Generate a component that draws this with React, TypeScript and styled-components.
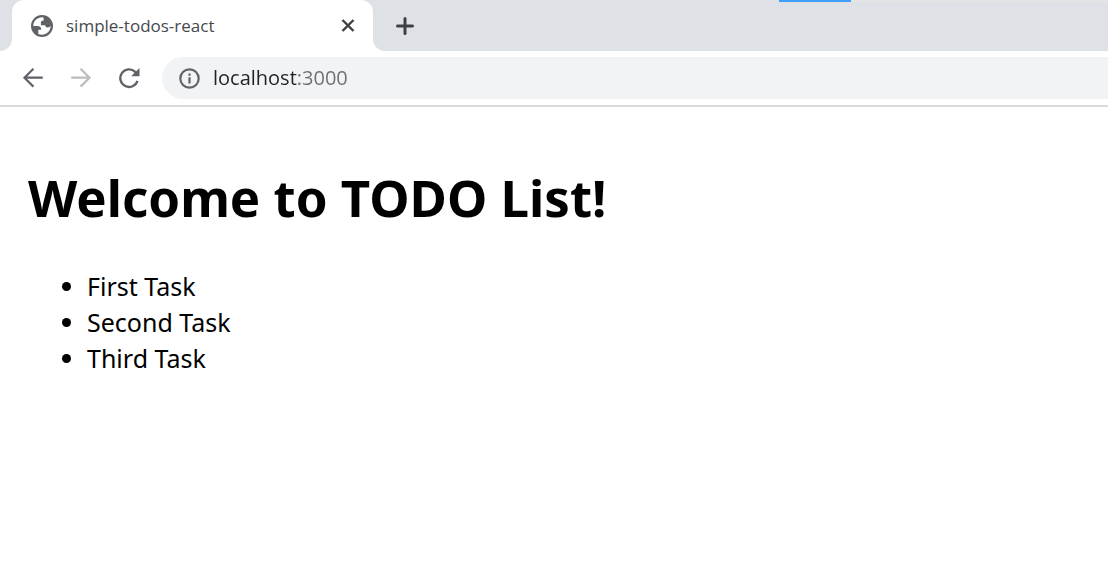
import React from "react";
import styled, { createGlobalStyle } from "styled-components";

const GlobalStyle = createGlobalStyle`
  * { box-sizing: border-box; }
  body { margin: 0; background: #fff; color: #000; }
`;

const uiFont = `"Open Sans", "Noto Sans", sans-serif`;
const pageFont = `"Noto Sans", "DejaVu Sans", sans-serif`;

const TabStrip = styled.header`
  position: relative;
  display: flex;
  height: 51px;
  background: #dee1e6;
`;

const StripBase = styled.div`
  display: flex;
  flex: 1;
  background: linear-gradient(to right, #fff 400px, #dee1e6 400px);
`;

const StripCorner = styled.div`
  flex: 0 0 12px;
  background: #dee1e6;
  border-radius: 0 0 12px 0;
`;

const TabCap = styled.div`
  display: flex;
  flex: 0 0 361px;
  background: linear-gradient(to bottom, #dee1e6 25px, #fff 25px);
`;

const Tab = styled.div`
  display: flex;
  align-items: center;
  flex: 1;
  padding: 1px 14px 0 18px;
  background: #fff;
  border-radius: 12px 12px 0 0;
`;

const TabTitle = styled.span`
  flex: 1;
  margin-left: 12px;
  font: 17px/24px ${uiFont};
  color: #45494d;
`;

const NewTabArea = styled.div`
  display: flex;
  align-items: center;
  flex: 1;
  padding-left: 16px;
  background: #dee1e6;
  border-radius: 0 0 0 12px;
`;

const IconButton = styled.button<{ $size: number }>`
  display: flex;
  align-items: center;
  justify-content: center;
  width: ${(p) => p.$size}px;
  height: ${(p) => p.$size}px;
  padding: 0;
  border: 0;
  border-radius: 50%;
  background: transparent;
  color: #5f6368;
  &:disabled { color: #babcbe; }
`;

const LoadTrack = styled.div`
  position: absolute;
  top: 0;
  right: 0;
  left: 779px;
  height: 2px;
  background: #e5e5e5;
`;

const LoadBar = styled.div`
  width: 72px;
  height: 2px;
  background: #409eff;
`;

const Toolbar = styled.nav`
  display: flex;
  align-items: center;
  gap: 16px;
  height: 56px;
  padding-left: 17px;
  border-bottom: 2px solid #dadada;
  background: #fff;
`;

const AddressBar = styled.label`
  display: flex;
  align-items: center;
  gap: 12px;
  flex: 1;
  height: 42px;
  margin-left: 1px;
  padding-left: 16px;
  border-radius: 21px 0 0 21px;
  background: #f1f3f4;
`;

const AddressInput = styled.input`
  flex: 1;
  min-width: 0;
  padding: 0;
  border: 0;
  outline: 0;
  font: 20px/28px ${uiFont};
  color: transparent;
  caret-color: #202124;
  background: linear-gradient(to right, #202124 84px, #6b6f73 84px);
  -webkit-background-clip: text;
  background-clip: text;
`;

const Page = styled.main`
  padding: 54px 28px;
  font: 25px/36px ${pageFont};
`;

const Title = styled.h1`
  margin: 0 0 35px;
  font: bold 51px/72px ${pageFont};
`;

const TaskList = styled.ul`
  margin: 0;
  padding-left: 59px;
`;

const tasks = ["First Task", "Second Task", "Third Task"];

const Globe = () => (
  <svg width="24" height="24" viewBox="0 0 24 24" aria-hidden="true">
    <circle cx="12" cy="12" r="11" fill="#5f6368" />
    <path
      fill="#fff"
      d="M13 3.300C7.500 3 3.300 7 3.300 12H7.500c2.500 0 3.700 1.200 3.700 3.700H8.300v4.200c5.500 2.500 12.400-1.200 12.400-8.400c-.5 1.300-1.600 2-3 2c-1.900 0-2.500-1-2.500-2.200h-4.300V8.300c0-1 .7-1.600 1.600-1.600h1.100V5.100c0-.8-.1-1.300-.6-1.800z"
    />
  </svg>
);

export default function App() {
  return (
    <>
      <GlobalStyle />
      <TabStrip>
        <StripBase>
          <StripCorner />
          <TabCap>
            <Tab>
              <Globe />
              <TabTitle>simple-todos-react</TabTitle>
              <IconButton $size={22} aria-label="Close tab">
                <svg width="22" height="22" viewBox="0 0 22 22" fill="none" stroke="#3c4043" strokeWidth="2.400">
                  <path d="M5.500 5l11 11M16.500 5l-11 11" />
                </svg>
              </IconButton>
            </Tab>
          </TabCap>
          <NewTabArea>
            <IconButton $size={32} aria-label="New tab">
              <svg width="22" height="22" viewBox="0 0 22 22" fill="none" stroke="#3c4043" strokeWidth="3" strokeLinecap="round">
                <path d="M11 3.500v15M3.500 11h15" />
              </svg>
            </IconButton>
          </NewTabArea>
        </StripBase>
        <LoadTrack>
          <LoadBar />
        </LoadTrack>
      </TabStrip>
      <Toolbar aria-label="Browser navigation">
        <IconButton $size={32} aria-label="Back">
          <svg width="24" height="24" viewBox="0 0 24 24" fill="none" stroke="currentColor" strokeWidth="2.200">
            <path d="M21.800 11.700H3.500M12.400 2.800L3.500 11.700l8.900 8.900" />
          </svg>
        </IconButton>
        <IconButton $size={32} aria-label="Forward" disabled>
          <svg width="24" height="24" viewBox="0 0 24 24" fill="none" stroke="currentColor" strokeWidth="2.200">
            <path d="M2.200 11.700h18.300M11.600 2.800l8.900 8.900-8.900 8.900" />
          </svg>
        </IconButton>
        <IconButton $size={32} aria-label="Reload">
          <svg width="24" height="24" viewBox="0 0 24 24" fill="none" stroke="currentColor" strokeWidth="2.300">
            <path d="M20.500 14.800A8.800 8.800 0 1 1 18.200 5.800L20 7.600" />
            <path d="M22.500 2v8.300h-8.300z" fill="currentColor" stroke="none" />
          </svg>
        </IconButton>
        <AddressBar>
          <svg width="23" height="23" viewBox="0 0 23 23" fill="none" stroke="#5f6368" strokeWidth="2.200" role="img" aria-label="Site information">
            <circle cx="11.500" cy="11.500" r="9.200" />
            <path d="M11.500 10.300v6.200M11.500 6.400v2.300" />
          </svg>
          <AddressInput type="text" aria-label="Address" defaultValue="localhost:3000" />
        </AddressBar>
      </Toolbar>
      <Page>
        <Title>Welcome to TODO List!</Title>
        <TaskList>
          {tasks.map((task) => (
            <li key={task}>{task}</li>
          ))}
        </TaskList>
      </Page>
    </>
  );
}
